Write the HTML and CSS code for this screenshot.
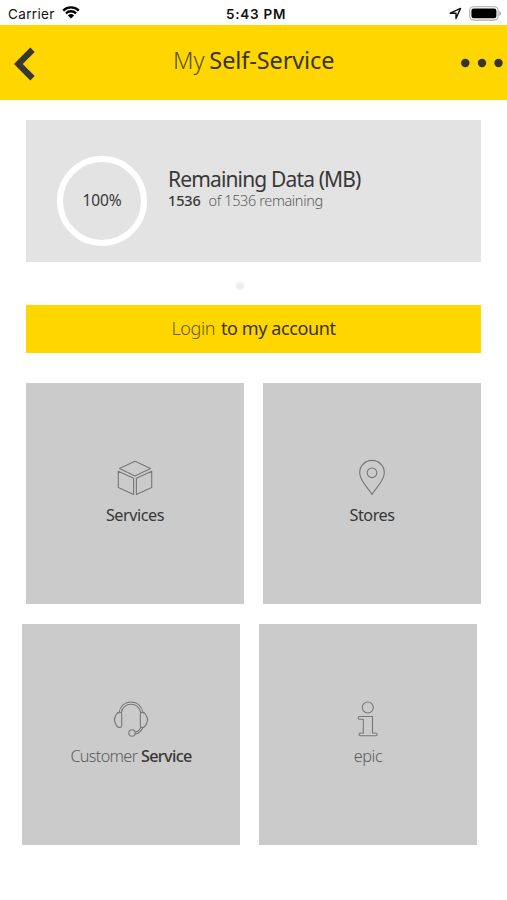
FILE: index.html
```html
<!DOCTYPE html>
<html lang="en">
<head>
<meta charset="utf-8">
<title>My Self-Service</title>
<link rel="stylesheet" href="styles.css">
</head>
<body>
<div class="status">
  <span class="carrier">Carrier</span>
  <svg class="wifi" width="18" height="13" viewBox="0 0 18 13"><path d="M1.2 4.6a11.2 11.2 0 0 1 15.6 0M3.9 7.3a7.4 7.4 0 0 1 10.2 0" fill="none" stroke="#000" stroke-width="2.3"/><path d="M5.9 9.4a4.5 4.5 0 0 1 6.2 0L9 12.6z"/></svg>
  <span class="time">5:43 PM</span>
  <svg class="location" width="13" height="13" viewBox="0 0 13 13"><path d="M1.2 6.2 11.5 1.4 7 11.5V6.2z" fill="none" stroke="#111" stroke-width="1.4" stroke-linejoin="round"/></svg>
  <svg class="battery" width="33" height="15" viewBox="0 0 33 15"><rect x=".7" y=".7" width="28.4" height="13.4" rx="4" fill="#fff" stroke="#aaa" stroke-width="1.1"/><rect x="2.4" y="2.5" width="25" height="9.8" rx="2.3"/><path d="M30.3 5v5q1.8-.8 1.8-2.5T30.3 5" fill="#aaa"/></svg>
</div>
<header class="header">
  <svg class="back" width="22" height="34" viewBox="0 0 22 34"><path d="M18.500 2.800 4.300 17l14.200 14.200" fill="none" stroke="#373630" stroke-width="6.200"/></svg>
  <h1 class="title"><span class="light">My</span> <span class="strong">Self-Service</span></h1>
  <svg class="more" width="42" height="10" viewBox="0 0 42 10" fill="#36362f"><circle cx="4.300" cy="5" r="4.200"/><circle cx="21" cy="5" r="4.200"/><circle cx="37.500" cy="5" r="4.200"/></svg>
</header>
<main>
  <section class="usage">
    <div class="ring">100%</div>
    <div class="details">
      <h2>Remaining Data (MB)</h2>
      <p><strong>1536</strong><span>of 1536 remaining</span></p>
    </div>
  </section>
  <div class="pager"></div>
  <a class="login"><span class="light">Login</span><span class="strong">to my account</span></a>
  <div class="row">
    <a class="tile">
      <svg width="38" height="38" viewBox="0 0 38 38"><path d="M19 2.200 34.500 9.500 19 17 3.500 9.500zM2.300 12.300 17.600 19.200V35.600L2.300 28.600zM35.700 12.300 20.400 19.200V35.600L35.700 28.600z"/></svg>
      <span class="services">Services</span>
    </a>
    <a class="tile">
      <svg width="38" height="38" viewBox="0 0 38 38"><path d="M19 35.400C14 27.500 6.700 21.500 6.700 13.700a12.300 12.300 0 0 1 24.600 0C31.300 21.500 24 27.500 19 35.400z"/><circle cx="19" cy="13.800" r="4.800"/></svg>
      <span class="stores">Stores</span>
    </a>
  </div>
  <div class="row second">
    <a class="tile">
      <svg width="38" height="38" viewBox="0 0 38 38"><path d="M6.800 13.300C8 6.800 12.300 2 19 2s11 4.800 12.200 11.300M9.300 12.500C10.600 7.500 13.900 4.300 19 4.300s8.400 3.200 9.700 8.200M9.700 14.200v11.300q0 2-1.800 2-3 0-4.500-4.300-2-3.400 0-6.800Q4.900 12.300 7.900 12.300q1.800 0 1.800 1.900zM28.300 14.200v11.300q0 2 1.800 2 3 0 4.500-4.300 2-3.400 0-6.800-1.500-4.100-4.500-4.100-1.800 0-1.800 1.900zM28.700 27.500Q27 31.400 23.200 32.200M31 27.300Q28.800 33 23.300 34.200"/><circle cx="20" cy="33" r="3.200"/></svg>
      <span class="customer"><span class="light">Customer</span> <b>Service</b></span>
    </a>
    <a class="tile">
      <svg width="38" height="38" viewBox="0 0 38 38"><circle cx="18.800" cy="7.500" r="5.500"/><path d="M10.500 16.500H23.500V33h3q1.800 0 1.800 1.300 0 1.400-1.800 1.400H11.800Q10 35.700 10 34.300 10 33 11.800 33h2.500V19.300h-3.500q-1.600 0-1.600-1.400t1.300-1.400z"/></svg>
      <span class="light epic">epic</span>
    </a>
  </div>
</main>
</body>
</html>
```
FILE: styles.css
```css
* { box-sizing: border-box; }
body {
  margin: 0;
  height: 900px;
  overflow: hidden;
  background: #fff;
  color: #383838;
  font-family: "Noto Sans", "Open Sans", sans-serif;
  white-space: nowrap;
}
svg { display: block; flex: none; }
h1, h2, p { margin: 0; font-weight: 400; }
.status {
  height: 25px;
  display: grid;
  grid-template-columns: 54px 172px 1fr 20px 38px;
  align-items: center;
  padding: 2px 0 0 8px;
  color: #111;
  font: 13.5px Inter, sans-serif;
}
.carrier { letter-spacing: .35px; }
.time { font-weight: 600; font-size: 13.5px; letter-spacing: .75px; }
.wifi { margin-top: -2px; }
.time { margin-left: -8px; }
.header {
  height: 75px;
  background: #ffd600;
  display: grid;
  grid-template-columns: 160px 1fr 46px;
  align-items: center;
}
.back { margin: 3px 0 0 14px; }
.title {
  display: flex;
  gap: 5px;
  margin: -5px 0 0 13px;
  font-size: 23.5px;
  line-height: 32px;
  letter-spacing: -.1px;
  color: #39351c;
}
.light { font-weight: 300; color: #5c5c5c; }
.title .light { color: #5c5011; }
main { padding: 20px 26px 0; }
.usage {
  width: 455px;
  height: 142px;
  background: #e3e3e3;
  display: flex;
}
.ring {
  width: 90px;
  height: 90px;
  margin: 36px 0 0 31px;
  border: 6px solid #fff;
  border-radius: 50%;
  text-align: center;
  font-size: 15.5px;
  line-height: 76px;
  letter-spacing: -.1px;
}
.details { margin: 47px 0 0 21px; }
.details h2 { font-size: 21px; line-height: 25px; letter-spacing: -.85px; }
.details p { font-size: 14.500px; line-height: 17px; letter-spacing: -.38px; }
.details strong { font-weight: 500; margin-right: 8px; letter-spacing: -.15px; }
.details span { font-weight: 300; color: #5c5c5c; }
.pager { width: 8px; height: 8px; margin: 20px 0 0 210px; border-radius: 50%; background: #eee; }
.login {
  width: 455px;
  height: 48px;
  margin-top: 15px;
  display: flex;
  justify-content: center;
  gap: 6px;
  background: #ffd600;
  font-size: 18px;
  line-height: 46px;
  letter-spacing: -.4px;
  color: #39351c;
}
.login .light { color: #665910; }
.row { display: flex; gap: 19px; margin-top: 30px; }
.row.second { margin: 20px 0 0 -4px; }
.tile {
  width: 218px;
  height: 221px;
  padding-top: 76px;
  background: #cbcbcb;
  display: flex;
  flex-direction: column;
  align-items: center;
  font-size: 16.200px;
  line-height: 24px;
  letter-spacing: -.45px;
}
.tile svg { fill: none; stroke: #777; stroke-width: 1.1; stroke-linejoin: round; }
.tile > span { margin-top: 6px; }
.tile .customer { letter-spacing: -.65px; }
.tile b { font-weight: 500; }
```
